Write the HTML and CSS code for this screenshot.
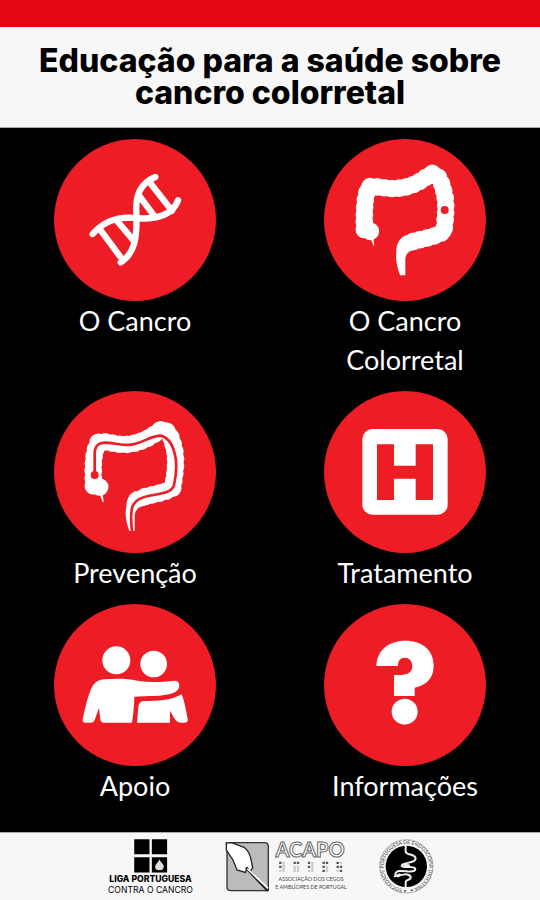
FILE: index.html
```html
<!DOCTYPE html>
<html lang="pt">
<head>
  <meta charset="UTF-8" />
  <meta name="viewport" content="width=device-width, initial-scale=1.0" />
  <title>Educação para a saúde sobre cancro colorretal</title>
  <link rel="stylesheet" href="styles.css">
</head>
<body>
  <header class="header">
    <h1>Educação para a saúde sobre cancro colorretal</h1>
  </header>

  <main class="menu">
    <a class="item" href="#cancro">
      <svg class="icon" viewBox="13 13 486 486" aria-hidden="true">
        <circle class="disc" cx="256" cy="256" r="243" />
        <g class="line">
          <path d="M317 127C272 146 257 180 260 235C263 305 257 355 213 383" />
          <path d="M129 298C155 268 192 249 238 249C300 256 365 252 385 197" />
          <path d="M151 284L211 365M205 262L249 314M304 148L367 228M270 185L311 240" />
        </g>
      </svg>
      <span>O Cancro</span>
    </a>

    <a class="item" href="#colorretal">
      <svg class="icon" viewBox="13 13 486 486" aria-hidden="true">
        <circle class="disc" cx="256" cy="256" r="243" />
        <path class="colon" d="M146 288L134 285C134 240 132 185 149 156C180 154 205 164 232 161C275 158 300 142 336 116C362 120 367 150 375 180C382 220 376 260 373 290C345 308 315 310 275 322" />
        <path class="bumps" d="M152 290L134 288C134 240 132 185 149 156C180 154 205 164 232 161C275 158 300 142 336 116C362 120 367 150 375 180C382 220 376 260 373 290C345 308 315 310 275 322" />
        <path class="white" d="M262 300C235 310 229 335 230 355C227 378 234 402 241 422H257V374C258 356 269 347 286 346ZM151 307L162 334L164 332L160 305Z" />
        <circle class="disc" cx="375" cy="226" r="12" />
      </svg>
      <span>O Cancro Colorretal</span>
    </a>

    <a class="item" href="#prevencao">
      <svg class="icon" viewBox="13 17 486 486" aria-hidden="true">
        <circle class="disc" cx="256" cy="260" r="243" />
        <path class="colon" d="M146 304L131 302C131 250 127 205 147 169C180 168 205 180 232 177C275 173 300 157 336 131C362 135 367 165 375 195C382 235 374 275 369 308C345 323 315 325 275 337" />
        <path class="bumps" d="M150 305L131 304C131 250 127 205 147 169C180 168 205 180 232 177C275 173 300 157 336 131C362 135 367 165 375 195C382 235 374 275 369 308C345 323 315 325 275 337" />
        <path class="white" d="M260 316C234 325 231 346 230 365C224 390 232 418 239 437H255V389C257 373 269 362 286 361ZM148 320L159 351L162 349L158 318Z" />
        <path class="scope" d="M135 266V205C135 181 145 172 170 172C200 173 220 182 245 178C280 173 300 153 330 151C355 154 367 174 375 204C384 235 380 266 373 300C365 322 338 324 311 329C280 334 257 341 248 365C242 383 244 410 247 439" />
        <circle class="disc" cx="135" cy="269" r="12" />
      </svg>
      <span>Prevenção</span>
    </a>

    <a class="item" href="#tratamento">
      <svg class="icon" viewBox="13 17 486 486" aria-hidden="true">
        <circle class="disc" cx="256" cy="260" r="243" />
        <rect class="white" x="128" y="131" width="256" height="257" rx="30" />
        <path class="disc" d="M172 177H223V241H288V177H340V344H288V280H223V344H172Z" />
      </svg>
      <span>Tratamento</span>
    </a>

    <a class="item" href="#apoio">
      <svg class="icon" viewBox="13 13 486 486" aria-hidden="true">
        <circle class="disc" cx="256" cy="256" r="243" />
        <circle class="white" cx="200" cy="182" r="42" />
        <circle class="white" cx="312" cy="193" r="40" />
        <path class="white" d="M108 369Q97 369 99 358C106 326 112 298 123 270Q135 240 164 239C203 236 234 237 263 243C300 249 337 247 376 243Q388 244 389 257Q389 272 371 280C338 292 294 288 254 291C253 316 252 341 247 369H162Q152 368 152 359L148 325L135 361Q132 369 125 369Z" />
        <path class="white" d="M262 369L266 322Q267 306 282 304C323 304 363 303 396 284C405 306 409 334 414 358Q416 369 405 369H393Q380 367 373 354L361 333V369Z" />
      </svg>
      <span>Apoio</span>
    </a>

    <a class="item" href="#informacoes">
      <svg class="icon" viewBox="13 13 486 486" aria-hidden="true">
        <circle class="disc" cx="256" cy="256" r="243" />
        <path class="white" d="M170 199C172 151 207 123 257 123C310 123 342 153 342 198C342 234 322 255 285 264V289H223V226H243C264 226 278 217 278 200C278 184 268 174 255 174C242 174 235 183 235 199Z" />
        <circle class="white" cx="255" cy="336" r="39" />
      </svg>
      <span>Informações</span>
    </a>
  </main>

  <footer class="footer">
    <svg class="logo liga" viewBox="50 40 262 171" role="img" aria-label="Liga Portuguesa Contra o Cancro">
      <path d="M132 44H178V89H132ZM185 44H231V89H185ZM132 98H178V144H132ZM185 98H231V144H185Z" />
      <path class="flame" d="M208 103C206 113 195 118 195 127Q195 137 208 137Q221 137 221 126C221 117 210 113 208 103Z" />
      <text class="liga-name" x="181" y="174">LIGA PORTUGUESA</text>
      <text class="liga-sub" x="181" y="206">CONTRA O CANCRO</text>
    </svg>

    <svg class="logo acapo" viewBox="33 48 363 153" role="img" aria-label="ACAPO">
      <path class="panel" d="M36 67L50 53H149Q160 53 160 64V197H48Q36 197 36 186Z" />
      <path class="hand" d="M34 54L50 53L87 67Q103 79 108 103L113 128L106 139L97 128L91 142L66 135L54 105L34 75Z" />
      <path class="cane" d="M93 128L158 197" />
      <path class="cane-light" d="M97 131L159 190" />
      <text class="acapo-name" x="285" y="96">ACAPO</text>
      <path class="braille" d="M196 110V117M196 122V129M239 110V117M249 110V117M282 110V117M282 122V129M326 110V117M336 110V117M326 122V129M326 134V141M368 110V117M368 122V129M378 122V129M378 134V141" />
      <path class="braille-off" d="M206 110V141M196 134V141M239 122V141M249 122V141M292 110V141M282 134V141M336 122V141M378 110V117M368 134V141" />
      <text class="acapo-sub" x="288" y="167">ASSOCIAÇÃO DOS CEGOS</text>
      <text class="acapo-sub" x="288" y="192">E AMBLÍOPES DE PORTUGAL</text>
    </svg>

    <svg class="logo sped" viewBox="42 42 165 165" role="img" aria-label="Sociedade Portuguesa de Endoscopia Digestiva">
      <defs>
        <path id="ring" d="M124 193A68 68 0 1 1 125 193" />
      </defs>
      <circle class="ring" cx="124" cy="124" r="80" />
      <circle cx="124" cy="124" r="62" />
      <text class="ring-text"><textPath href="#ring">• SOCIEDADE PORTUGUESA DE ENDOSCOPIA DIGESTIVA •</textPath></text>
      <path class="snake" d="M122 62V80C125 91 145 86 151 97C158 116 112 111 110 122C113 132 148 119 151 132C151 145 119 136 102 138C89 141 87 153 99 154C111 147 131 145 137 155C140 166 123 162 122 171V187" />
      <path class="snake" d="M89 154L104 148M113 119L132 121" />
    </svg>
  </footer>
</body>
</html>
```
FILE: styles.css
```css
* {
  box-sizing: border-box;
}

body {
  margin: 0;
  min-height: 100vh;
  display: flex;
  flex-direction: column;
  background-color: #000;
  font-family: Lato, sans-serif;
}

.header {
  padding: 18px 24px;
  border-top: 27px solid #e30613;
  border-bottom: 1px solid #aaa;
  background-color: #f7f7f7;
}

h1 {
  margin: 0;
  color: #000;
  font-family: Inter, sans-serif;
  font-size: 32px;
  font-weight: 800;
  line-height: 32px;
  text-align: center;
}

.menu {
  flex: 1;
  display: grid;
  grid-template-columns: 1fr 1fr;
  align-content: start;
  gap: 12px 0;
  padding: 11px 0;
}

.item {
  display: flex;
  flex-direction: column;
  align-items: center;
  color: #fff;
  font-size: 27px;
  line-height: 39px;
  text-align: center;
  text-decoration: none;
}

.item span {
  max-width: 162px;
}

.icon {
  display: block;
  width: 60%;
}

.disc {
  fill: #ee1c25;
}

.white {
  fill: #fff;
}

.line {
  fill: none;
  stroke: #fff;
  stroke-width: 19;
  stroke-linecap: round;
}

.colon,
.bumps {
  fill: none;
  stroke: #fff;
  stroke-width: 46;
  stroke-linejoin: round;
  stroke-linecap: round;
}

.bumps {
  stroke-width: 53;
  stroke-dasharray: 0 22;
}

.scope {
  fill: none;
  stroke: #ee1c25;
  stroke-width: 8;
}

.footer {
  display: flex;
  justify-content: center;
  align-items: center;
  gap: 32px;
  min-height: 68px;
  border-top: 1px solid #aaa;
  background-color: #f7f7f7;
}

.logo {
  display: block;
  overflow: visible;
}

.logo text {
  text-anchor: middle;
}

.liga {
  width: 87px;
}

.flame {
  fill: #ddd;
}

.liga-name,
.liga-sub {
  font-family: Inter, sans-serif;
  font-size: 26px;
}

.liga-name {
  font-weight: 800;
}

.acapo {
  width: 121px;
}

.panel {
  fill: #bbb;
  stroke: #333;
  stroke-width: 4;
}

.hand {
  fill: #fff;
  stroke: #222;
  stroke-width: 4;
}

.cane {
  stroke: #222;
  stroke-width: 8;
}

.cane-light {
  stroke: #fff;
  stroke-width: 5;
}

.acapo-name {
  fill: #fff;
  stroke: #666;
  stroke-width: 3;
  font-size: 60px;
  font-weight: 700;
}

.braille,
.braille-off {
  stroke: #555;
  stroke-width: 7;
}

.braille-off {
  stroke: #ccc;
}

.acapo-sub {
  fill: #444;
  font-size: 16px;
}

.sped {
  width: 55px;
}

.ring {
  fill: #f7f7f7;
  stroke: #888;
  stroke-width: 2;
}

.logo .ring-text {
  fill: #333;
  font-size: 15px;
  text-anchor: start;
}

.snake {
  fill: none;
  stroke: #eee;
  stroke-width: 6;
  stroke-linecap: round;
}
```
